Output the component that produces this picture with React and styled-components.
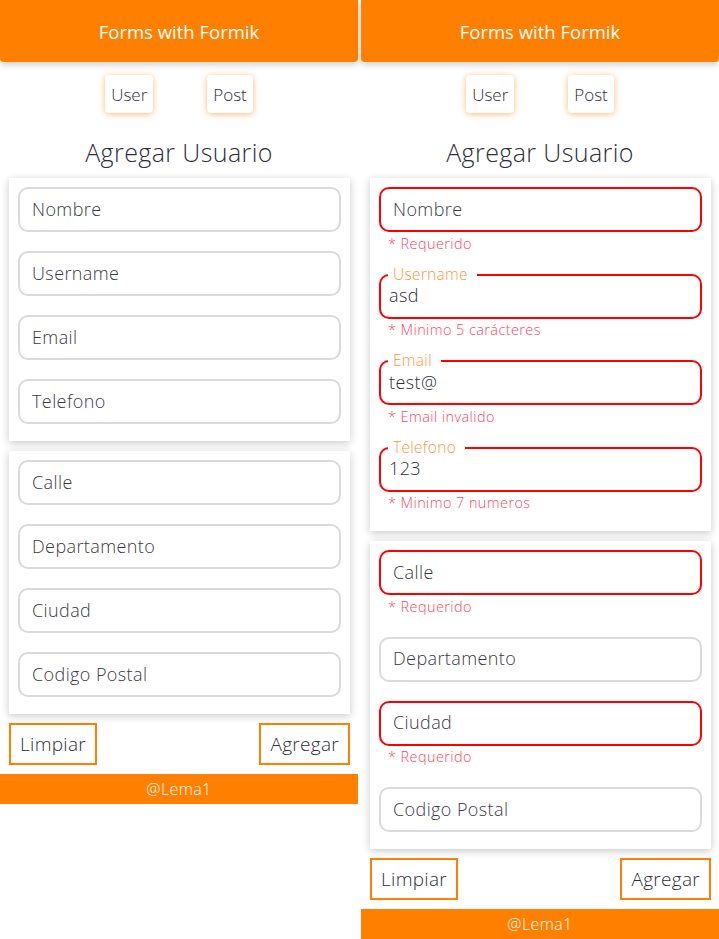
import React from "react";
import styled, { createGlobalStyle } from "styled-components";

const orange = "#ff8000";
const text = "#2e2e3a";
const errRed = "#ff0000";
const errText = "#ff4466";

const GlobalStyle = createGlobalStyle`
  * { box-sizing: border-box; }
  body {
    margin: 0;
    background: #fff;
    font-family: "Open Sans", "Liberation Sans", sans-serif;
    font-weight: 300;
    color: ${text};
  }
`;

const Page = styled.div`
  display: flex;
  align-items: flex-start;
  gap: 3px;
  width: 719px;
  height: 939px;
  overflow: hidden;
`;

const Screen = styled.div`
  width: 358px;
  flex: none;
  display: flex;
  flex-direction: column;
  > * {
    flex-shrink: 0;
  }
`;

const Header = styled.header`
  height: 62px;
  background: ${orange};
  border-radius: 0 0 4px 4px;
  box-shadow: 0 3px 6px rgba(0, 0, 0, 0.18);
  display: flex;
  align-items: center;
  justify-content: center;
  color: #fff;
  font-size: 18.5px;
  font-weight: 400;
`;

const Nav = styled.nav`
  display: flex;
  justify-content: center;
  gap: 54px;
  margin-top: 13px;
`;

const NavButton = styled.button`
  height: 38px;
  padding: 0 6px;
  border: none;
  border-radius: 4px;
  background: #fff;
  box-shadow: 0 1px 6px rgba(255, 128, 0, 0.55);
  font-family: inherit;
  font-weight: 300;
  font-size: 17px;
  color: ${text};
`;

const Title = styled.h2`
  margin: 0;
  height: 65px;
  display: flex;
  align-items: center;
  justify-content: center;
  padding-top: 12px;
  font-size: 25px;
  letter-spacing: 0.4px;
  font-weight: 300;
  color: ${text};
`;

const Card = styled.section`
  margin: 0 8px 10px 9px;
  padding: 9px 9px 0;
  background: #fff;
  box-shadow: 0 2px 8px rgba(0, 0, 0, 0.22);
`;

const Field = styled.div`
  position: relative;
  margin-bottom: 19px;
  &:last-child {
    margin-bottom: 17px;
  }
`;

const Input = styled.input`
  display: block;
  width: 100%;
  height: 45px;
  border: 2px solid ${(p) => (p.$error ? errRed : "#dadada")};
  border-radius: 10px;
  padding: 0 0 2px ${(p) => (p.$filled ? "8px" : "12px")};
  font-family: inherit;
  font-weight: 300;
  font-size: 18px;
  letter-spacing: 0.4px;
  color: ${text};
  background: #fff;
  outline: none;
  &::placeholder {
    color: #3a3a46;
    opacity: 1;
  }
`;

const FloatLabel = styled.label`
  position: absolute;
  left: 9px;
  top: -9px;
  padding: 0 9px 0 5px;
  background: #fff;
  color: #ff9640;
  font-size: 15.5px;
  letter-spacing: 0.3px;
  line-height: 18px;
`;

const Error = styled.div`
  height: 22.5px;
  padding-left: 9px;
  display: flex;
  align-items: center;
  font-size: 14.5px;
  letter-spacing: 0.4px;
  color: ${errText};
`;

const Actions = styled.div`
  display: flex;
  justify-content: space-between;
  margin: -1px 8px 9px 9px;
`;

const ActionButton = styled.button`
  height: 42px;
  padding: 0 9px;
  border: 2px solid ${orange};
  background: #fff;
  font-family: inherit;
  font-weight: 300;
  font-size: 19px;
  letter-spacing: 0.3px;
  color: ${text};
`;

const Footer = styled.footer`
  height: 30px;
  background: ${orange};
  color: #fff;
  display: flex;
  align-items: center;
  justify-content: center;
  font-size: 16px;
  letter-spacing: 0.4px;
`;

const userFields = ["Nombre", "Username", "Email", "Telefono"];
const addressFields = ["Calle", "Departamento", "Ciudad", "Codigo Postal"];

const filledUser = [
  { name: "Nombre", error: "* Requerido" },
  { name: "Username", value: "asd", error: "* Minimo 5 carácteres" },
  { name: "Email", value: "test@", error: "* Email invalido" },
  { name: "Telefono", value: "123", error: "* Minimo 7 numeros" },
];
const filledAddress = [
  { name: "Calle", error: "* Requerido" },
  { name: "Departamento" },
  { name: "Ciudad", error: "* Requerido" },
  { name: "Codigo Postal" },
];

const FormField = ({ name, value, error }) => (
  <Field>
    {value && <FloatLabel>{name}</FloatLabel>}
    <Input
      placeholder={value ? "" : name}
      defaultValue={value || ""}
      $filled={!!value}
      $error={!!error}
    />
    {error && <Error>{error}</Error>}
  </Field>
);

const Phone = ({ user, address }) => (
  <Screen>
    <Header>Forms with Formik</Header>
    <Nav>
      <NavButton>User</NavButton>
      <NavButton>Post</NavButton>
    </Nav>
    <Title>Agregar Usuario</Title>
    <Card>
      {user.map((f) => (
        <FormField key={f.name} {...f} />
      ))}
    </Card>
    <Card>
      {address.map((f) => (
        <FormField key={f.name} {...f} />
      ))}
    </Card>
    <Actions>
      <ActionButton>Limpiar</ActionButton>
      <ActionButton>Agregar</ActionButton>
    </Actions>
    <Footer>@Lema1</Footer>
  </Screen>
);

export default function App() {
  return (
    <>
      <GlobalStyle />
      <Page>
        <Phone
          user={userFields.map((name) => ({ name }))}
          address={addressFields.map((name) => ({ name }))}
        />
        <Phone user={filledUser} address={filledAddress} />
      </Page>
    </>
  );
}
